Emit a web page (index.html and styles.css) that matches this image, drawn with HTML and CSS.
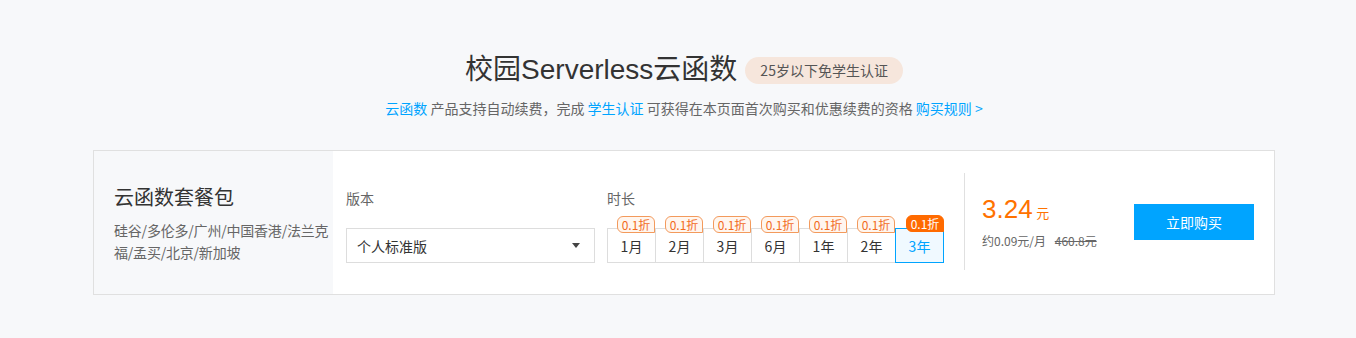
FILE: index.html
```html
<!DOCTYPE html>
<html>
<head>
<meta charset="utf-8">
<link rel="stylesheet" href="styles.css">
</head>
<body>
<div class="wrap">
  <div class="hero">
    <div class="hero_head">
      <h1 class="hero_title">校园Serverless云函数</h1>
      <span class="hero_badge">25岁以下免学生认证</span>
    </div>
    <p class="hero_sub">
      <a class="link">云函数</a> 产品支持自动续费，完成 <a class="link">学生认证</a> 可获得在本页面首次购买和优惠续费的资格 <a class="link">购买规则 &gt;</a>
    </p>
  </div>

  <div class="card">
    <div class="card_side">
      <div class="side_title">云函数套餐包</div>
      <div class="side_regions">硅谷/多伦多/广州/中国香港/法兰克福/孟买/北京/新加坡</div>
    </div>

    <div class="card_opts">
      <div class="opt opt_version">
        <div class="opt_label">版本</div>
        <div class="select">
          <span>个人标准版</span>
          <i class="caret"></i>
        </div>
      </div>
      <div class="opt opt_time">
        <div class="opt_label">时长</div>
        <div class="periods">
          <div class="period"><span class="tag">0.1折</span>1月</div>
          <div class="period"><span class="tag">0.1折</span>2月</div>
          <div class="period"><span class="tag">0.1折</span>3月</div>
          <div class="period"><span class="tag">0.1折</span>6月</div>
          <div class="period"><span class="tag">0.1折</span>1年</div>
          <div class="period"><span class="tag">0.1折</span>2年</div>
          <div class="period active"><span class="tag">0.1折</span>3年</div>
        </div>
      </div>
    </div>

    <div class="card_buy">
      <div class="price">
        <div class="price_now"><span class="num">3.24</span> <span class="unit">元</span></div>
        <div class="price_sub">约0.09元/月 <s class="price_old">460.8元</s></div>
      </div>
      <button class="buy_btn">立即购买</button>
    </div>
  </div>
</div>
</body>
</html>
```

FILE: styles.css
```css
body {
  margin: 0;
  padding-left: 12px;
  background: #f7f8fa;
  font-family: "Noto Sans CJK SC", "Liberation Sans", sans-serif;
  color: #333;
}
.wrap {
  width: 1182px;
  margin: 0 auto;
}

.hero {
  padding-top: 50px;
  text-align: center;
}
.hero_head {
  display: flex;
  justify-content: center;
  align-items: center;
  gap: 8px;
}
.hero_title {
  margin: 0;
  font-family: "Liberation Sans", "Noto Sans CJK SC", sans-serif;
  font-size: 28px;
  font-weight: normal;
  line-height: 40px;
  color: #333;
}
.hero_badge {
  height: 27px;
  line-height: 27px;
  padding: 0 15px;
  border-radius: 14px;
  background: #f6e6dc;
  color: #555;
  font-size: 14px;
}
.hero_sub {
  margin: 8px 0 0;
  font-size: 14px;
  line-height: 20px;
  color: #666;
}
.link {
  color: #00a4ff;
}

.card {
  margin-top: 32px;
  height: 143px;
  display: flex;
  border: 1px solid #e0e0e0;
  background: #fff;
}
.card_side {
  width: 239px;
  box-sizing: border-box;
  padding: 0 0 0 20px;
  background: #f7f8fa;
  display: flex;
  flex-direction: column;
  justify-content: center;
}
.side_title {
  font-size: 20px;
  line-height: 28px;
  color: #333;
}
.side_regions {
  margin-top: 8px;
  font-size: 14px;
  line-height: 22px;
  letter-spacing: -0.2px;
  color: #666;
}

.card_opts {
  display: flex;
  gap: 12px;
  padding: 37px 20px 0 13px;
}
.opt_label {
  font-size: 14px;
  line-height: 20px;
  color: #666;
  margin-bottom: 20px;
}
.select {
  width: 249px;
  height: 35px;
  box-sizing: border-box;
  border: 1px solid #ddd;
  padding: 0 14px 0 10px;
  display: flex;
  align-items: center;
  justify-content: space-between;
  font-size: 14px;
  color: #333;
}
.caret {
  width: 0;
  height: 0;
  border-left: 4px solid transparent;
  border-right: 4px solid transparent;
  border-top: 5px solid #444;
}

.periods {
  display: flex;
  border-left: 1px solid #ddd;
}
.period {
  position: relative;
  width: 48px;
  height: 35px;
  box-sizing: border-box;
  border: 1px solid #ddd;
  border-left: none;
  display: flex;
  align-items: center;
  justify-content: center;
  font-size: 14px;
  color: #333;
}
.period.active {
  width: 49px;
  margin-left: -1px;
  border: 1px solid #00a4ff;
  background: #f0f9ff;
  color: #00a4ff;
}
.tag {
  position: absolute;
  top: -13px;
  right: 0;
  width: 38px;
  height: 17px;
  box-sizing: border-box;
  border: 1px solid #f39a5c;
  border-radius: 6px 6px 0 6px;
  background: #fff6ef;
  color: #f26b1d;
  font-size: 12px;
  line-height: 15px;
  text-align: center;
}
.period.active .tag {
  right: -1px;
  top: -14px;
  background: #ff6a00;
  border-color: #ff6a00;
  color: #fff;
}

.card_buy {
  flex: 1;
  display: flex;
  align-items: center;
  justify-content: space-between;
  margin: 22px 0 24px;
  padding: 0 20px 0 17px;
  border-left: 1px solid #e0e0e0;
}
.price_now {
  color: #ff7200;
  line-height: 30px;
}
.price_now .num {
  font-family: "Liberation Sans", sans-serif;
  font-size: 26px;
}
.price_now .unit {
  font-size: 13px;
}
.price_sub {
  margin-top: 4px;
  font-size: 12px;
  color: #666;
}
.price_old {
  margin-left: 6px;
  color: #666;
}
.buy_btn {
  width: 120px;
  height: 36px;
  border: none;
  background: #00a4ff;
  color: #fff;
  font-family: "Noto Sans CJK SC", sans-serif;
  font-size: 14px;
}
```
